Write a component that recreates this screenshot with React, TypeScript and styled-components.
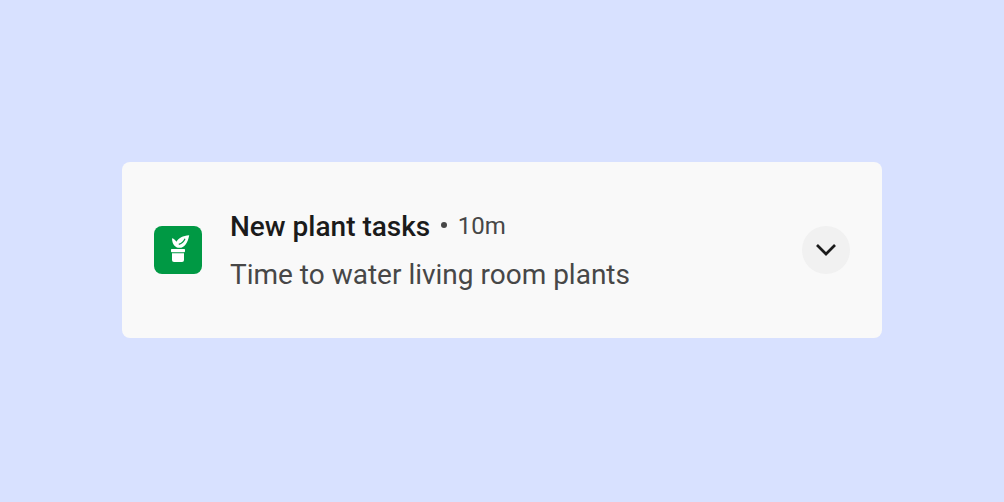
import React from "react";
import styled, { createGlobalStyle } from "styled-components";

const GlobalStyle = createGlobalStyle`
  body { margin: 0; background: #d8e1ff; font-family: Roboto, sans-serif; }
`;
const Page = styled.main`
  box-sizing: border-box;
  height: 502px;
  padding: 162px 122px;
  background: #d8e1ff;
`;
const Card = styled.article`
  box-sizing: border-box;
  display: flex;
  align-items: center;
  height: 176px;
  padding: 0 32px;
  border-radius: 8px;
  background: #f9f9f9;
`;
const AppIcon = styled.div`
  width: 48px;
  height: 48px;
  border-radius: 8px;
  background: #009944;
  svg { display: block; }
`;
const Content = styled.div`
  flex: 1;
  margin-left: 28px;
  padding-top: 1px;
  white-space: nowrap;
`;
const Header = styled.div`
  display: flex;
  align-items: center;
  height: 48px;
`;
const Title = styled.span`
  font-size: 28px;
  font-weight: 500;
  color: #1b1b1b;
`;
const Dot = styled.span`
  width: 6px;
  height: 6px;
  margin: 0 10.5px 1.5px 11px;
  border-radius: 50%;
  background: #474747;
`;
const Time = styled.span`
  font-size: 24px;
  color: #474747;
`;
const Message = styled.div`
  margin-top: 1px;
  font-size: 28px;
  line-height: 48px;
  color: #474747;
`;
const ExpandButton = styled.button`
  display: flex;
  width: 48px;
  height: 48px;
  padding: 0;
  border: 0;
  border-radius: 50%;
  background: #f1f1f1;
`;

export default function App() {
  return (
    <Page>
      <GlobalStyle />
      <Card>
        <AppIcon>
          <svg width="48" height="48" viewBox="0 0 48 48" fill="#fff">
            <path d="M17.6 23h12.8q.6 0 .6.6v1.7q0 .9-.9.9H17.9q-.9 0-.9-.9v-1.7q0-.6.6-.6z" />
            <path d="M18 27.3h12V34q0 2-2 2h-8q-2 0-2-2z" />
            <path d="M18 12.2c2.2.7 3.6 1.9 4.4 3.5 2.1-3.5 6.4-5.9 12.8-6.4-.6 3.6-1.7 6.6-3.6 9.1-1.7 2.2-3.7 3.4-6 3.4-4.7-.1-7.5-3.7-7.6-9.6z" />
            <path d="M31 12.8q-1.7 4.2-6.2 5.6" fill="none" stroke="#009944" strokeWidth="1.2" />
          </svg>
        </AppIcon>
        <Content>
          <Header>
            <Title>New plant tasks</Title>
            <Dot />
            <Time>10m</Time>
          </Header>
          <Message>Time to water living room plants</Message>
        </Content>
        <ExpandButton aria-label="Expand">
          <svg width="48" height="48" viewBox="0 0 48 48" fill="none" stroke="#1b1b1b" strokeWidth="2.7">
            <path d="M15 19l9 9 9-9" />
          </svg>
        </ExpandButton>
      </Card>
    </Page>
  );
}
